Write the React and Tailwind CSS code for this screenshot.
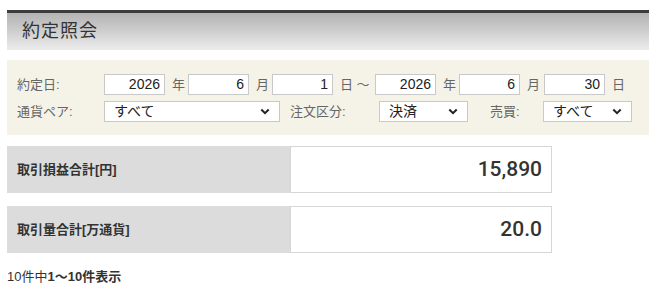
import React from 'react';

const jp = "font-['Liberation_Sans','Noto_Sans_CJK_JP',sans-serif]";

function NumBox({ value }) {
  return (
    <input
      readOnly
      value={value}
      className="w-[61px] h-[21px] bg-white border border-[#c9c9c9] text-right pr-[4px] text-[14px] text-[#222] outline-none"
    />
  );
}

function SelectBox({ label, width }) {
  return (
    <div className={`${width} h-[21px] bg-white border border-[#c9c9c9] flex items-center justify-between pl-[9px] pr-[9px] text-[14px] text-[#222]`}>
      <span>{label}</span>
      <svg width="10" height="7" viewBox="0 0 10 7" fill="none">
        <path d="M1.3 1.5 L5 5.2 L8.7 1.5" stroke="#222" strokeWidth="2" />
      </svg>
    </div>
  );
}

function Unit({ children, width }) {
  return <span className={`${width} pl-[7px] text-[13px] text-[#666]`}>{children}</span>;
}

export default function App() {
  return (
    <div className={`w-[649px] h-[288px] bg-white pl-[7px] pt-[10px] ${jp}`}>
      {/* header */}
      <div className="h-[40px] border-t-[3px] border-[#3c3c3c] bg-gradient-to-b from-[#b3b3b3] to-[#ececec] flex items-center pl-[15px]">
        <h1 className="text-[18px] text-[#333] tracking-[1px]">約定照会</h1>
      </div>

      {/* filters */}
      <div className="mt-[10px] h-[75px] bg-[#f5f3e7] pl-[10px] pt-[14px] flex flex-col gap-[6px]">
        <div className="flex items-center">
          <span className="w-[87px] text-[13px] text-[#666]">約定日:</span>
          <NumBox value="2026" />
          <Unit width="w-[23px]">年</Unit>
          <NumBox value="6" />
          <Unit width="w-[23px]">月</Unit>
          <NumBox value="1" />
          <Unit width="w-[42px]">日 ～</Unit>
          <NumBox value="2026" />
          <Unit width="w-[23px]">年</Unit>
          <NumBox value="6" />
          <Unit width="w-[24px]">月</Unit>
          <NumBox value="30" />
          <Unit width="w-[24px]">日</Unit>
        </div>
        <div className="flex items-center">
          <span className="w-[87px] text-[13px] text-[#666]">通貨ペア:</span>
          <SelectBox label="すべて" width="w-[176px]" />
          <span className="w-[99px] pl-[10px] text-[13px] text-[#666]">注文区分:</span>
          <SelectBox label="決済" width="w-[89px]" />
          <span className="w-[75px] pl-[22px] text-[13px] text-[#666]">売買:</span>
          <SelectBox label="すべて" width="w-[89px]" />
        </div>
      </div>

      {/* totals */}
      <div className="mt-[11px] flex flex-col gap-[13px]">
        <div className="flex h-[47px]">
          <div className="w-[283px] bg-[#dcdcdc] flex items-center pl-[10px] text-[13px] font-bold text-[#333]">取引損益合計[円]</div>
          <div className="w-[262px] bg-white border border-[#d6d6d6] flex items-center justify-end pr-[9px] font-['Roboto',sans-serif] text-[21px] font-medium text-[#333]">15,890</div>
        </div>
        <div className="flex h-[47px]">
          <div className="w-[283px] bg-[#dcdcdc] flex items-center pl-[10px] text-[13px] font-bold text-[#333]">取引量合計[万通貨]</div>
          <div className="w-[262px] bg-white border border-[#d6d6d6] flex items-center justify-end pr-[9px] font-['Roboto',sans-serif] text-[21px] font-medium text-[#333]">20.0</div>
        </div>
      </div>

      {/* footer */}
      <p className="mt-[14px] text-[13px] text-[#333]">
        10件中<span className="font-bold">1～10件表示</span>
      </p>
    </div>
  );
}
